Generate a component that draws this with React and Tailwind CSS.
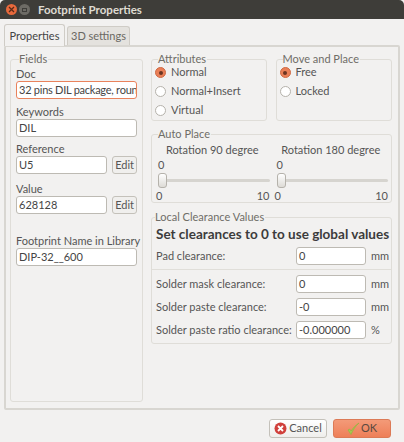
import React from "react";

function GroupBox({ title, className = "", children }) {
  return (
    <fieldset className={`border border-[#dfddd8] rounded-[3px] min-w-0 ${className}`}>
      <legend className="text-[11px] leading-[12px] text-[#6f6d67] ml-[3px] pr-[1px]">{title}</legend>
      {children}
    </fieldset>
  );
}

function TextBox({ value, focused, className = "" }) {
  return (
    <div
      className={`h-[18px] bg-white rounded-[3px] border px-[2px] text-[11px] leading-[16px] text-[#444444] overflow-hidden whitespace-nowrap ${
        focused ? "border-[#e9825c]" : "border-[#bdbab3]"
      } ${className}`}
    >
      {value}
    </div>
  );
}

function Radio({ label, checked }) {
  return (
    <div className="h-[19px] flex items-center gap-[5px]">
      <span
        className={`w-[11px] h-[11px] rounded-full border flex items-center justify-center ${
          checked ? "bg-[#ea7f57] border-[#cf6a44]" : "bg-white border-[#b5b2ab]"
        }`}
      >
        {checked && <span className="w-[4px] h-[4px] rounded-full bg-[#6b3422]" />}
      </span>
      <span className="text-[11px] text-[#555555]">{label}</span>
    </div>
  );
}

function Slider({ title }) {
  return (
    <div className="w-[116px] flex flex-col">
      <div className="text-[11px] leading-[16px] text-[#555555] text-center pt-[1px]">{title}</div>
      <div className="text-[11px] leading-[14px] text-[#555555] pl-[3px]">0</div>
      <div className="relative h-[16px] mt-[1px]">
        <div className="absolute left-[3px] right-0 top-[6px] h-[3px] rounded-full bg-[#d6d4cf]" />
        <div className="absolute left-[3px] top-0 w-[9px] h-[15px] rounded-[3px] border border-[#b5b2ab] bg-gradient-to-b from-white to-[#dddbd6]" />
      </div>
      <div className="flex justify-between text-[11px] leading-[14px] text-[#555555] pl-[1px]">
        <span>0</span>
        <span>10</span>
      </div>
    </div>
  );
}

function ClearanceRow({ label, value, unit, className = "" }) {
  return (
    <div className={`flex items-center ${className}`}>
      <span className="w-[144px] pl-[4px] text-[11px] text-[#555555] whitespace-nowrap">{label}</span>
      <TextBox value={value} className="w-[70px]" />
      <span className="ml-[5px] text-[11px] text-[#555555]">{unit}</span>
    </div>
  );
}

export default function App() {
  return (
    <div
      className="w-[404px] h-[442px] bg-[#f2f1f0] flex flex-col overflow-hidden"
      style={{ fontFamily: 'Lato, "Open Sans", sans-serif' }}
    >
      {/* Title bar */}
      <div className="h-[19px] shrink-0 bg-[#3e3d39] rounded-t-[5px] flex items-center pl-[6px]">
        <span className="w-[11px] h-[11px] rounded-full bg-[#e8693c] flex items-center justify-center">
          <svg width="7" height="7" viewBox="0 0 7 7">
            <path d="M1 1l5 5M6 1L1 6" stroke="#5a2a18" strokeWidth="1.3" />
          </svg>
        </span>
        <span className="ml-[2px] w-[11px] h-[11px] rounded-full bg-[#6d6b65] flex items-center justify-center">
          <span className="w-[5px] h-[4px] border border-[#3e3d39]" />
        </span>
        <span className="ml-[8px] text-[11.5px] font-bold text-[#dfdbd2]">Footprint Properties</span>
      </div>

      {/* Tabs */}
      <div className="flex items-end pl-[4px] pt-[4px] h-[26px] shrink-0">
        <div className="h-[22px] w-[61px] bg-[#f2f1f0] border border-b-0 border-[#cfccc6] rounded-t-[3px] text-[11px] leading-[21px] text-[#444444] text-center relative z-10 -mb-[1px]">
          Properties
        </div>
        <div className="h-[19px] w-[63px] ml-[2px] bg-[#e4e2de] border border-b-0 border-[#cfccc6] rounded-t-[3px] text-[11px] leading-[18px] text-[#6a6862] text-center whitespace-nowrap">
          3D settings
        </div>
      </div>

      {/* Notebook page */}
      <div className="mx-[4px] h-[365px] shrink-0 border-2 border-[#d8d6d1] rounded-[2px] flex gap-[8px] pl-[4px] pr-[6px] pt-[6px]">
        <GroupBox title="Fields" className="w-[133px] h-[349px] px-[5px] shrink-0">
          <div className="text-[11px] leading-[14px] text-[#555555] mt-[2px]">Doc</div>
          <TextBox value="32 pins DIL package, roun" focused className="tracking-[-0.25px]" />
          <div className="text-[11px] leading-[14px] text-[#555555] mt-[6px]">Keywords</div>
          <TextBox value="DIL" />
          <div className="text-[11px] leading-[14px] text-[#555555] mt-[5px]">Reference</div>
          <div className="flex gap-[5px]">
            <TextBox value="U5" className="w-[92px]" />
            <div className="w-[25px] h-[18px] rounded-[3px] border border-[#c4c1ba] bg-[#f0efed] text-[11px] leading-[16px] text-center text-[#555555]">Edit</div>
          </div>
          <div className="text-[11px] leading-[14px] text-[#555555] mt-[8px]">Value</div>
          <div className="flex gap-[5px]">
            <TextBox value="628128" className="w-[92px]" />
            <div className="w-[25px] h-[18px] rounded-[3px] border border-[#c4c1ba] bg-[#f0efed] text-[11px] leading-[16px] text-center text-[#555555]">Edit</div>
          </div>
          <div className="text-[11px] leading-[14px] text-[#555555] mt-[20px] whitespace-nowrap">Footprint Name in Library</div>
          <TextBox value="DIP-32__600" />
        </GroupBox>

        <div className="flex-1 min-w-0 flex flex-col">
          <div className="flex gap-[9px]">
            <GroupBox title="Attributes" className="w-[116px] h-[68px] pl-[3px]">
              <div className="-mt-[2px]">
                <Radio label="Normal" checked />
                <Radio label="Normal+Insert" />
                <Radio label="Virtual" />
              </div>
            </GroupBox>
            <GroupBox title="Move and Place" className="w-[117px] h-[68px] pl-[3px]">
              <div className="-mt-[2px]">
                <Radio label="Free" checked />
                <Radio label="Locked" />
              </div>
            </GroupBox>
          </div>

          <GroupBox title="Auto Place" className="mt-[7px] h-[75px] px-[3px]">
            <div className="flex gap-[4px] pt-[1px]">
              <Slider title="Rotation 90 degree" />
              <Slider title="Rotation 180 degree" />
            </div>
          </GroupBox>

          <GroupBox title="Local Clearance Values" className="mt-[8px] h-[133px]">
            <div className="pl-[4px] text-[13.5px] leading-[16px] font-bold text-[#3c3c3c] mt-[3px] whitespace-nowrap">Set clearances to 0 to use global values</div>
            <ClearanceRow label="Pad clearance:" value="0" unit="mm" className="mt-[5px]" />
            <div className="border-t border-[#e0ded9] mt-[4px]" />
            <ClearanceRow label="Solder mask clearance:" value="0" unit="mm" className="mt-[5px]" />
            <ClearanceRow label="Solder paste clearance:" value="-0" unit="mm" className="mt-[5px]" />
            <ClearanceRow label="Solder paste ratio clearance:" value="-0.000000" unit="%" className="mt-[5px]" />
          </GroupBox>
        </div>
      </div>

      {/* Buttons */}
      <div className="flex justify-end gap-[6px] pr-[13px] pt-[9px]">
        <div className="w-[58px] h-[19px] rounded-[3px] border border-[#c4c1ba] bg-gradient-to-b from-white to-[#efeeec] flex items-center justify-center gap-[2px] text-[11px] text-[#555555]">
          <svg width="13" height="13" viewBox="0 0 13 13">
            <circle cx="6.5" cy="6.5" r="6" fill="#d0403c" />
            <path d="M4 4l5 5M9 4l-5 5" stroke="#fff" strokeWidth="1.8" />
          </svg>
          Cancel
        </div>
        <div className="w-[58px] h-[19px] rounded-[3px] border border-[#dc7a56] bg-gradient-to-b from-[#f39a78] to-[#ee7f58] flex items-center justify-center gap-[1px] text-[11px] text-[#5a4a40]">
          <svg width="13" height="14" viewBox="0 0 13 14">
            <path d="M1 8l3 4.5C6 8 8.5 4 12 1 8.5 3 6 6 4.2 9L2.5 7z" fill="#a5c94e" stroke="#8fb23e" strokeWidth="0.6" />
          </svg>
          OK
        </div>
      </div>
    </div>
  );
}
